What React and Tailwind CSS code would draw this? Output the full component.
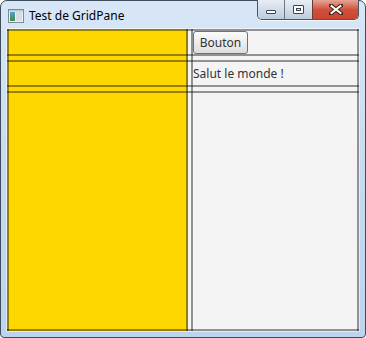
import React from "react";

const font = { fontFamily: '"Segoe UI", "Noto Sans", "Open Sans", sans-serif' };

function AppIcon() {
  return (
    <svg width="16" height="14" viewBox="0 0 16 14">
      <defs>
        <linearGradient id="ic" x1="0" y1="0" x2="0" y2="1">
          <stop offset="0" stopColor="#5aa0c8" />
          <stop offset="1" stopColor="#3d8a4a" />
        </linearGradient>
      </defs>
      <rect x="0.5" y="0.5" width="15" height="13" fill="#eef2f6" stroke="#7d8a96" />
      <rect x="2" y="3" width="5" height="9" fill="url(#ic)" />
      <rect x="8" y="3" width="6" height="9" fill="#d6dde4" />
      <rect x="1" y="1" width="14" height="1.5" fill="#b9c6d3" />
    </svg>
  );
}

function CaptionButtons() {
  return (
    <div className="-mt-px flex h-[20px] self-start overflow-hidden rounded-b-[5px] border border-t-0 border-[#4a5563] shadow-[0_1px_0_rgba(255,255,255,0.7)]">
      <div className="flex w-[26px] items-end justify-center bg-gradient-to-b from-[#e6edf5] via-[#d3dde9] to-[#bccbdc] pb-[5px]">
        <div className="h-[4px] w-[10px] rounded-[1px] border border-[#3a4450] bg-white" />
      </div>
      <div className="flex w-[28px] items-center justify-center border-l border-[#6b7785] bg-gradient-to-b from-[#e6edf5] via-[#d3dde9] to-[#bccbdc]">
        <div className="flex h-[9px] w-[11px] items-center justify-center rounded-[1px] border border-[#3a4450] bg-white">
          <div className="h-[3px] w-[5px] border border-[#3a4450] bg-[#dfe6ee]" />
        </div>
      </div>
      <div className="flex w-[46px] items-center justify-center border-l border-[#6b3a32] bg-gradient-to-b from-[#e5a597] via-[#d0513c] to-[#c9452e]">
        <svg width="14" height="11" viewBox="0 0 14 11">
          <path d="M2 1.5 L12 9.5 M12 1.5 L2 9.5" stroke="#3b1c16" strokeWidth="4" strokeLinecap="square" />
          <path d="M2.5 2 L11.5 9 M11.5 2 L2.5 9" stroke="#ffffff" strokeWidth="2" strokeLinecap="square" />
        </svg>
      </div>
    </div>
  );
}

export default function App() {
  return (
    <div className="h-[338px] w-[366px] overflow-hidden bg-white" style={font}>
      <div className="flex h-full flex-col rounded-t-[7px] rounded-b-[4px] border border-[#3e4c5c] bg-gradient-to-b from-[#d8e7f7] via-[#c6dbf1] to-[#bcd4ed]">
        <div className="flex h-[28px] shrink-0 items-center pl-[7px] pr-[6px]">
          <div className="mt-[2px]">
            <AppIcon />
          </div>
          <span className="ml-[5px] mt-[1px] text-[12px] text-black">Test de GridPane</span>
          <div className="flex-1" />
          <CaptionButtons />
        </div>
        <div className="flex-1 px-[6px] pb-[6px]">
          <div className="grid h-[302px] grid-cols-[181px_3px_168px] grid-rows-[27px_4px_27px_4px_240px] bg-[#f4f4f4] shadow-[0_0_0_1px_rgba(255,255,255,0.5)]">
            {/* yellow pane in column 0 */}
            <div className="col-start-1 row-span-5 row-start-1 bg-[#ffd700]" />

            {/* content */}
            <div className="col-start-3 row-start-1 flex items-start pl-[2px] pt-[2px]">
              <button className="h-[23px] w-[55px] rounded-[3px] border border-[#3c7fb1] bg-gradient-to-b from-[#fbfbfb] to-[#dedede] text-[12px] leading-none text-[#333]">
                Bouton
              </button>
            </div>
            <div className="col-start-3 row-start-3 flex items-center pl-[2px]">
              <span className="text-[12px] leading-none text-[#333]">Salut le monde !</span>
            </div>

            {/* grid lines */}
            <div className="pointer-events-none col-start-1 row-span-5 row-start-1 border-x-2 border-black/40" />
            <div className="pointer-events-none col-start-3 row-span-5 row-start-1 border-x-2 border-black/40" />
            <div className="pointer-events-none col-span-3 col-start-1 row-start-1 border-y-2 border-black/40" />
            <div className="pointer-events-none col-span-3 col-start-1 row-start-3 border-y-2 border-black/40" />
            <div className="pointer-events-none col-span-3 col-start-1 row-start-5 border-y-2 border-black/40" />
          </div>
        </div>
      </div>
    </div>
  );
}
